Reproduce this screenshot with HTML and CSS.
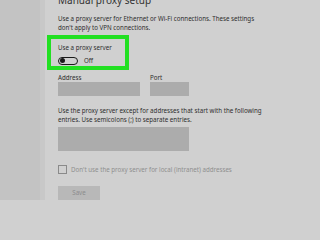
FILE: index.html
```html
<!DOCTYPE html>
<html>
<head>
<meta charset="utf-8">
<link rel="stylesheet" href="styles.css">
</head>
<body>
<div class="page">
  <div class="side"></div>
  <div class="band"></div>
  <div class="main">
    <div class="title">Manual proxy setup</div>
    <p class="desc">Use a proxy server for Ethernet or Wi-Fi connections. These settings<br>don't apply to VPN connections.</p>
    <div class="highlight">
      <div class="label">Use a proxy server</div>
      <div class="toggle-row">
        <span class="toggle"><span class="knob"></span></span>
        <span class="state">Off</span>
      </div>
    </div>
    <div class="fields">
      <div class="field addr">
        <div class="label">Address</div>
        <div class="input"></div>
      </div>
      <div class="field port">
        <div class="label">Port</div>
        <div class="input"></div>
      </div>
    </div>
    <p class="desc desc2">Use the proxy server except for addresses that start with the following<br>entries. Use semicolons (;) to separate entries.</p>
    <div class="textarea"></div>
    <div class="check-row">
      <span class="checkbox"></span>
      <span class="check-label">Don't use the proxy server for local (intranet) addresses</span>
    </div>
    <div class="save">Save</div>
  </div>
</div>
</body>
</html>
```
FILE: styles.css
```css
html, body {
  margin: 0;
  padding: 0;
}
body {
  background: #d0d0d0;
  font-family: "Noto Sans", "Open Sans", sans-serif;
  color: #2e2e2e;
  width: 300px;
  height: 200px;
  overflow: hidden;
}
.page {
  display: flex;
  height: 200px;
}
.side {
  width: 40px;
  background: #c3c3c3;
  flex: none;
}
.band {
  width: 5px;
  background: #c8c8c8;
  flex: none;
}
.main {
  padding-left: 13px;
  flex: 1;
  display: flex;
  flex-direction: column;
  align-items: flex-start;
}
.title {
  font-size: 10px;
  line-height: 12px;
  margin-top: -6px;
  color: #333;
}
.desc {
  margin: 8px 0 0;
  font-size: 6.2px;
  line-height: 9px;
  white-space: nowrap;
}
.highlight {
  margin-top: 3px;
  margin-left: -11px;
  width: 67px;
  border: 4px solid #22e022;
  padding: 4px 0 1px 7px;
}
.label {
  font-size: 6.2px;
  line-height: 9px;
}
.toggle-row {
  margin-top: 4px;
  display: flex;
  align-items: center;
  gap: 6px;
}
.toggle {
  width: 16px;
  height: 6px;
  border: 1.5px solid #1a1a1a;
  border-radius: 5px;
  display: flex;
  align-items: center;
  padding: 0 1px;
}
.knob {
  width: 5px;
  height: 5px;
  border-radius: 50%;
  background: #1a1a1a;
}
.state {
  font-size: 6.2px;
  line-height: 9px;
}
.fields {
  display: flex;
  gap: 10px;
  margin-top: 3px;
}
.field .input {
  height: 14px;
  background: #acacac;
}
.addr .input {
  width: 82px;
}
.port .input {
  width: 39px;
}
.desc2 {
  margin-top: 10px;
}
.textarea {
  margin-top: 3px;
  width: 131px;
  height: 25px;
  background: #acacac;
}
.check-row {
  margin-top: 14px;
  display: flex;
  align-items: center;
  gap: 4px;
}
.checkbox {
  width: 7px;
  height: 7px;
  border: 1px solid #8a8a8a;
}
.check-label {
  font-size: 6.2px;
  line-height: 9px;
  color: #8f8f8f;
}
.save {
  margin-top: 12px;
  width: 42px;
  height: 14px;
  background: #b8b8b8;
  color: #8c8c8c;
  font-size: 6.2px;
  line-height: 14px;
  text-align: center;
}
```
